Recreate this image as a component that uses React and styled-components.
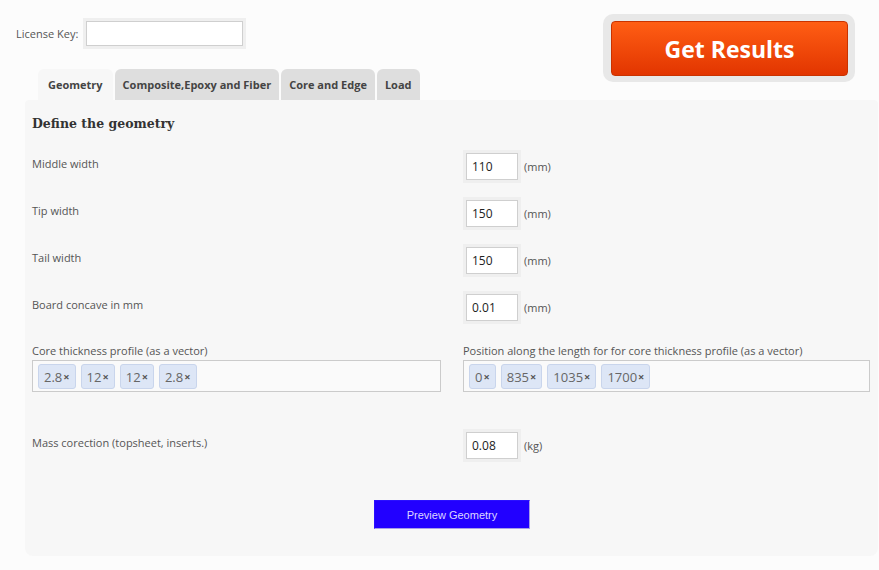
import React from "react";
import styled, { createGlobalStyle } from "styled-components";

const GlobalStyle = createGlobalStyle`
  body {
    margin: 0;
    background: #fcfcfc;
    font-family: "Open Sans", "Liberation Sans", sans-serif;
    color: #555;
  }
`;

const Page = styled.div`
  width: 879px;
  min-height: 570px;
  background: #fcfcfc;
`;

const Header = styled.div`
  display: flex;
  justify-content: space-between;
  align-items: flex-start;
`;

const HeaderLeft = styled.div`
  display: flex;
  flex-direction: column;
  padding-left: 16px;
`;

const LicenseRow = styled.label`
  display: flex;
  align-items: center;
  gap: 8px;
  margin-top: 21px;
  font-size: 11px;
  color: #555;
`;

const TextInput = styled.input`
  box-sizing: border-box;
  width: ${(p) => p.$w || 52}px;
  height: ${(p) => p.$h || 27}px;
  border: 1px solid #cfcfcf;
  background: #fff;
  box-shadow: 0 0 0 3px #efefef;
  padding: 0 5px;
  font-family: "Open Sans", "Liberation Sans", sans-serif;
  font-size: 12px;
  color: #222;
  outline: none;
`;

const Tabs = styled.div`
  display: flex;
  gap: 2px;
  margin-top: 23px;
  margin-left: 22px;
`;

const Tab = styled.div`
  height: 31px;
  display: flex;
  align-items: center;
  padding: 0 ${(p) => p.$pad || 8}px;
  border-radius: 6px 6px 0 0;
  background: ${(p) => (p.$active ? "#f7f7f7" : "#dedede")};
  font-size: 11px;
  font-weight: 700;
  color: #444;
`;

const ResultsFrame = styled.div`
  margin-top: 14px;
  margin-right: 24px;
  padding: 7px 7px 6px 8px;
  background: #e8e8e8;
  border-radius: 10px;
`;

const ResultsButton = styled.button`
  width: 237px;
  height: 55px;
  border: 1px solid #c93300;
  border-radius: 4px;
  background: linear-gradient(#ff5e14, #e23500);
  color: #fff;
  font-family: "Open Sans", "Liberation Sans", sans-serif;
  font-size: 23px;
  font-weight: 700;
  cursor: pointer;
`;

const Panel = styled.div`
  margin: 0 1px 0 25px;
  padding: 13px 8px 27px 7px;
  background: #f7f7f7;
  border-radius: 4px 4px 8px 8px;
`;

const Heading = styled.h2`
  margin: 0 0 20px;
  padding-top: 1px;
  font-family: "DejaVu Serif", "Liberation Serif", serif;
  font-size: 12.5px;
  line-height: 19px;
  font-weight: 700;
  color: #333;
`;

const Grid = styled.div`
  display: grid;
  grid-template-columns: 409px 407px;
  column-gap: 22px;
  row-gap: ${(p) => p.$gap || 20}px;
  margin-top: ${(p) => p.$top || 0}px;
  align-items: start;
`;

const Label = styled.div`
  font-size: 11px;
  line-height: 16px;
  padding-top: ${(p) => p.$pt ?? 3}px;
  color: #555;
`;

const Field = styled.div`
  display: flex;
  align-items: center;
  gap: 6px;
  padding-left: 3px;
  font-size: 11px;
  color: #555;
`;

const VectorBlock = styled.div`
  display: flex;
  flex-direction: column;
  gap: 1px;
`;

const TagBox = styled.div`
  box-sizing: border-box;
  height: 32px;
  display: flex;
  align-items: flex-start;
  gap: 5px;
  padding: 3px 5px;
  border: 1px solid #cbcbcb;
  background: #fafafa;
`;

const Tag = styled.span`
  box-sizing: border-box;
  height: 25px;
  display: inline-flex;
  align-items: center;
  gap: 1px;
  padding: 0 5px;
  background: #dde6f6;
  border: 1px solid #c9d5ec;
  border-radius: 3px;
  font-size: 13px;
  color: #666;
`;

const TagClose = styled.span`
  font-size: 11px;
  font-weight: 700;
  color: #555;
`;

const ButtonRow = styled.div`
  display: flex;
  justify-content: center;
  margin-top: 41px;
`;

const PreviewButton = styled.button`
  width: 156px;
  height: 29px;
  margin-left: 2px;
  background: #2200ff;
  border: 1px solid;
  border-color: #2a10ff #a79ee6 #a79ee6 #2a10ff;
  color: #ddd6ff;
  font-family: "Liberation Sans", Arial, sans-serif;
  font-size: 11px;
  cursor: pointer;
`;

const rows = [
  ["Middle width", "110", "(mm)"],
  ["Tip width", "150", "(mm)"],
  ["Tail width", "150", "(mm)"],
  ["Board concave in mm", "0.01", "(mm)"],
];

const coreTags = ["2.8", "12", "12", "2.8"];
const posTags = ["0", "835", "1035", "1700"];

function TagInput({ label, tags }) {
  return (
    <VectorBlock>
      <Label $pt={0}>{label}</Label>
      <TagBox>
        {tags.map((t, i) => (
          <Tag key={i}>
            {t}
            <TagClose>×</TagClose>
          </Tag>
        ))}
      </TagBox>
    </VectorBlock>
  );
}

export default function App() {
  return (
    <Page>
      <GlobalStyle />
      <Header>
        <HeaderLeft>
          <LicenseRow>
            License Key:
            <TextInput $w={157} $h={25} />
          </LicenseRow>
          <Tabs>
            <Tab $active $pad={10}>Geometry</Tab>
            <Tab>Composite,Epoxy and Fiber</Tab>
            <Tab>Core and Edge</Tab>
            <Tab>Load</Tab>
          </Tabs>
        </HeaderLeft>
        <ResultsFrame>
          <ResultsButton>Get Results</ResultsButton>
        </ResultsFrame>
      </Header>
      <Panel>
        <Heading>Define the geometry</Heading>
        <Grid>
          {rows.map(([l, v, u]) => (
            <React.Fragment key={l}>
              <Label>{l}</Label>
              <Field>
                <TextInput defaultValue={v} />
                {u}
              </Field>
            </React.Fragment>
          ))}
        </Grid>
        <Grid $top={22}>
          <TagInput label="Core thickness profile (as a vector)" tags={coreTags} />
          <TagInput
            label="Position along the length for for core thickness profile (as a vector)"
            tags={posTags}
          />
        </Grid>
        <Grid $top={40}>
          <Label>Mass corection (topsheet, inserts.)</Label>
          <Field>
            <TextInput defaultValue="0.08" />
            (kg)
          </Field>
        </Grid>
        <ButtonRow>
          <PreviewButton>Preview Geometry</PreviewButton>
        </ButtonRow>
      </Panel>
    </Page>
  );
}
